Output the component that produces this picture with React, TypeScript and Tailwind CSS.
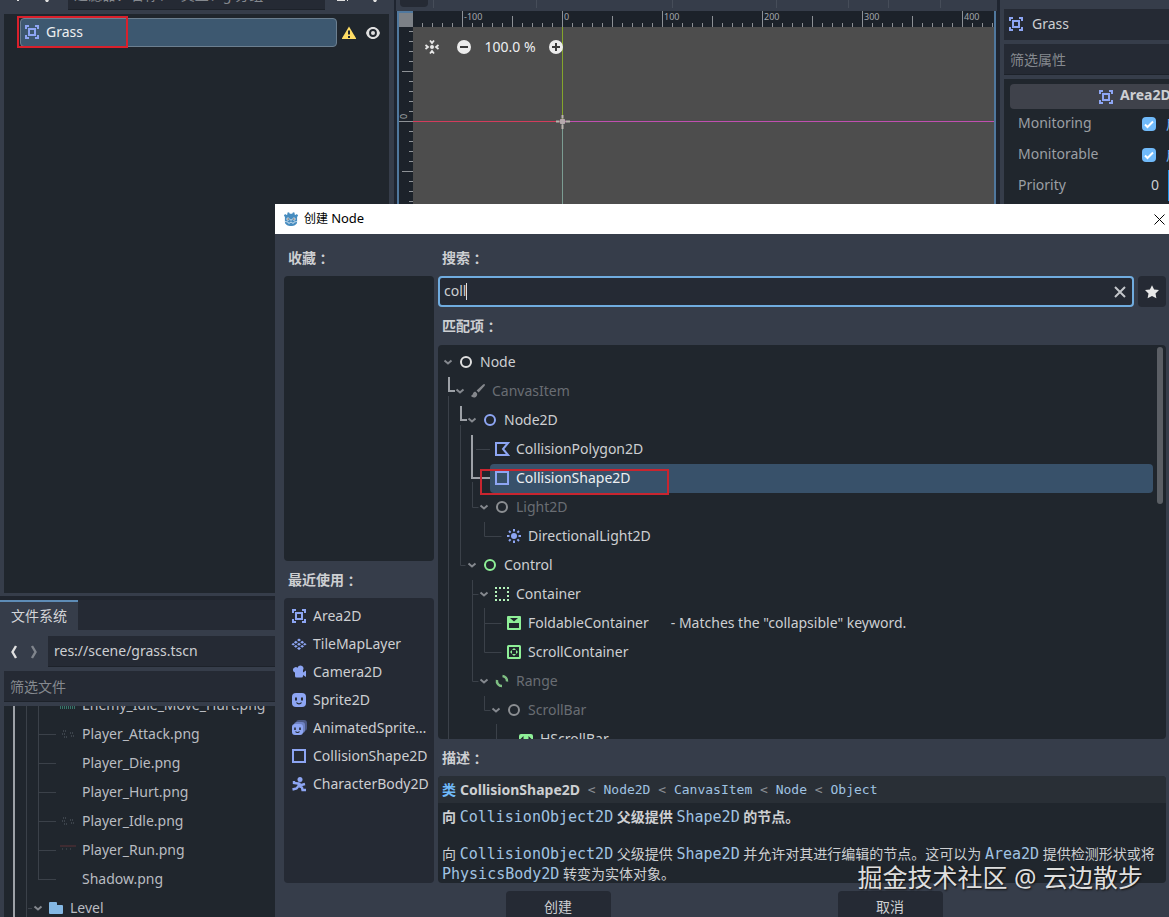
import type { ReactNode } from 'react';

const BLUE = '#8da5f3';
const GREEN = '#8eef97';

interface IconProps {
  color?: string;
}

function Icon({ children }: { children: ReactNode }) {
  return (
    <svg width="16" height="16" viewBox="0 0 16 16" fill="none" className="shrink-0" aria-hidden="true">
      {children}
    </svg>
  );
}

function NodeIcon({ color = '#e0e0e0' }: IconProps) {
  return (
    <Icon>
      <circle cx="8" cy="8" r="5" stroke={color} strokeWidth="2" />
    </Icon>
  );
}

function AreaIcon() {
  return (
    <Icon>
      <path
        fill={BLUE}
        d="M1 1v4h2V3h2V1zm10 0v2h2v2h2V1zM4 4v8h8V4zm2 2h4v4H6zm-5 5v4h4v-2H3v-2zm12 0v2h-2v2h4v-4z"
        fillRule="evenodd"
      />
    </Icon>
  );
}

function BrushIcon() {
  return (
    <Icon>
      <path
        fill="#84878c"
        d="M14.6 1.2c-.5-.3-1 0-1.5.4L6.6 7.6l2 2 5.9-6.6c.5-.6.6-1.4.1-1.8zM5.6 8.8c-1.3-.1-2.2.6-2.6 1.7-.4 1.3-1 1.9-2.1 2.3 1 1.6 3.3 2.2 4.9 1.1 1.1-.7 1.7-2 1.3-3.3z"
      />
    </Icon>
  );
}

function PolygonIcon() {
  return (
    <Icon>
      <path d="M14 2H2v12h12L9 8z" stroke={BLUE} strokeWidth="2" />
    </Icon>
  );
}

function ShapeIcon() {
  return (
    <Icon>
      <rect x="2" y="2" width="12" height="12" stroke={BLUE} strokeWidth="2" />
    </Icon>
  );
}

function LightIcon() {
  return (
    <Icon>
      <circle cx="8" cy="8" r="3" fill={BLUE} />
      <path
        d="M8 1v2.5M8 12.5V15M1 8h2.5M12.5 8H15M3 3l1.6 1.6M11.4 11.4L13 13M3 13l1.6-1.6M11.4 4.6L13 3"
        stroke={BLUE}
        strokeWidth="2"
      />
    </Icon>
  );
}

function ContainerIcon() {
  return (
    <Icon>
      <rect x="2" y="2" width="12" height="12" stroke="#b5f5bb" strokeWidth="2" strokeDasharray="2 2" strokeDashoffset="1" />
    </Icon>
  );
}

function FoldableIcon() {
  return (
    <Icon>
      <path
        fill={GREEN}
        fillRule="evenodd"
        d="M2 1a1 1 0 0 0-1 1v12a1 1 0 0 0 1 1h12a1 1 0 0 0 1-1V2a1 1 0 0 0-1-1zm2 2h8L8 6.5zM3 8h10v5H3z"
      />
    </Icon>
  );
}

function ScrollContainerIcon() {
  return (
    <Icon>
      <rect x="2" y="2" width="12" height="12" rx=".5" stroke={GREEN} strokeWidth="2" />
      <path fill={GREEN} d="M8 4L6 6h4zM8 12l2-2H6zM4 8l2 2V6zM12 8l-2-2v4z" />
    </Icon>
  );
}

function RangeIcon() {
  return (
    <Icon>
      <path d="M8.5 3A5 5 0 0 1 13 8.5M8 13A5 5 0 0 1 3 7" stroke="#7fbf83" strokeWidth="2.5" />
    </Icon>
  );
}

function HScrollIcon() {
  return (
    <Icon>
      <path
        fill={GREEN}
        fillRule="evenodd"
        d="M3 3a2 2 0 0 0-2 2v6a2 2 0 0 0 2 2h10a2 2 0 0 0 2-2V5a2 2 0 0 0-2-2zm2.5 2v6l-3-3zm5 0l3 3-3 3z"
      />
    </Icon>
  );
}

function TileMapIcon() {
  return (
    <Icon>
      <path
        fill={BLUE}
        d="M8 2.5L6 4l2 1.5L10 4zM4.8 4.8L2.9 6.3l1.9 1.4 2-1.4zM11.2 4.8l-2 1.5 2 1.4 1.9-1.4zM8 6.8L6 8.2l2 1.5 2-1.5zM2.2 6.9L.4 8.2l1.8 1.4L4 8.2zM13.8 6.9L12 8.2l1.8 1.4 1.8-1.4zM4.8 8.9l-1.9 1.4 1.9 1.5 2-1.5zM11.2 8.9l-2 1.4 2 1.5 1.9-1.5zM8 11l-2 1.4L8 14l2-1.6z"
      />
    </Icon>
  );
}

function CameraIcon() {
  return (
    <Icon>
      <path
        fill={BLUE}
        d="M9.5 1.5a3 3 0 0 0-2.9 2.3 2.8 2.8 0 1 0-2.6 4.8V12a1.5 1.5 0 0 0 1.5 1.5h5A1.5 1.5 0 0 0 12 12v-1l3 2V6.5l-3 2V6.2A3 3 0 0 0 9.5 1.5z"
      />
    </Icon>
  );
}

function SpriteIcon() {
  return (
    <Icon>
      <rect x="1" y="1" width="14" height="14" rx="4" fill={BLUE} />
      <path d="M5 5.5v3M11 5.5v3" stroke="#252a34" strokeWidth="2" />
      <path d="M5.5 10.5a3 3 0 0 0 5 0" stroke="#252a34" strokeWidth="1.3" />
    </Icon>
  );
}

function AnimatedSpriteIcon() {
  return (
    <Icon>
      <rect x="5" y="0" width="11" height="11" rx="3" fill="#4b5884" />
      <rect x="3" y="2" width="11" height="11" rx="3" fill="#6f82c2" />
      <rect x="1" y="4" width="11" height="11" rx="3" fill={BLUE} />
      <path d="M4 7.5V10M9 7.5V10" stroke="#252a34" strokeWidth="1.6" />
      <path d="M4.5 11.5a2.5 2.5 0 0 0 4 0" stroke="#252a34" strokeWidth="1.2" />
    </Icon>
  );
}

function CharacterIcon() {
  return (
    <Icon>
      <circle cx="9" cy="3.5" r="2.5" fill={BLUE} />
      <path
        d="M8.5 6.5L7.5 10M3 5v2l4 .5 3.5 1.5 3.5-1M7.5 10l-2 2.5-4 1M7.5 10l3.5 1.5.5 2.5H15"
        stroke={BLUE}
        strokeWidth="2.4"
      />
    </Icon>
  );
}

function FolderIcon() {
  return (
    <Icon>
      <path fill="#84b8e4" d="M2 2a1 1 0 0 0-1 1v10a1 1 0 0 0 1 1h12a1 1 0 0 0 1-1V6a1 1 0 0 0-1-1H9V3a1 1 0 0 0-1-1z" />
    </Icon>
  );
}

function WarningIcon() {
  return (
    <Icon>
      <path fill="#ffdd65" d="M8 1.500L1 13.200V14h14v-.8z" />
      <path d="M8 5.500v4M8 11v2" stroke="#21262e" strokeWidth="2" />
    </Icon>
  );
}

function EyeIcon() {
  return (
    <Icon>
      <path
        fill="#e0e0e0"
        fillRule="evenodd"
        d="M8 2C4.5 2 2 4.5 1 8c1 3.5 3.5 6 7 6s6-2.5 7-6c-1-3.5-3.5-6-7-6zm0 2.1a3.9 3.9 0 1 1 0 7.8 3.9 3.9 0 0 1 0-7.8z"
      />
      <circle cx="8" cy="8" r="2" fill="#e0e0e0" />
    </Icon>
  );
}

function GodotIcon() {
  return (
    <Icon>
      <path
        fill="#478cbf"
        d="M6 1.2l-1.7.5.2 1.600-1 .6-1.400-1L.9 4.400l1 1.500V11c0 2.500 3 4 6.100 4s6.100-1.500 6.100-4V5.900l1-1.500-1.200-1.500-1.400 1-1-.6.2-1.600-1.700-.5-.8 1.500H6.800z"
      />
      <circle cx="5" cy="8" r="1.5" fill="#fff" />
      <circle cx="11" cy="8" r="1.5" fill="#fff" />
      <circle cx="5.1" cy="8.1" r=".8" fill="#414042" />
      <circle cx="10.9" cy="8.1" r=".8" fill="#414042" />
      <path d="M2 10.5l3 .5.3 1.2h1.5l.2-.9h2l.2.9h1.5l.3-1.2 3-.5" stroke="#dceaf5" strokeWidth=".8" />
      <path d="M8 8v1.6" stroke="#fff" />
    </Icon>
  );
}

function Chevron() {
  return (
    <svg width="12" height="12" viewBox="0 0 12 12" fill="none" className="shrink-0" aria-hidden="true">
      <path d="M2.5 4.5L6 7.5l3.5-3" stroke="#84888e" strokeWidth="2" />
    </svg>
  );
}

function Heading({ children, className }: { children: string; className: string }) {
  return (
    <h2 className={`flex items-center pl-1 font-bold text-[#cdcfd2] ${className}`}>
      {children}
      <span lang="zh-Hant" className="font-['Noto_Sans_CJK_TC']">
        ：
      </span>
    </h2>
  );
}

/* Scene dock and file system */

const files = [
  'Enemy_Idle_Move_Hurt.png',
  'Player_Attack.png',
  'Player_Die.png',
  'Player_Hurt.png',
  'Player_Idle.png',
  'Player_Run.png',
  'Shadow.png',
];

function FileThumb({ name }: { name: string }) {
  return (
    <Icon>
      {name.startsWith('Enemy') && <path d="M0 9h16M0 11h16" stroke="#3f8f7c" strokeWidth="1.5" strokeDasharray="1 1" />}
      {(name === 'Player_Attack.png' || name === 'Player_Idle.png') && (
        <path d="M3 5h4M2 8h4M10 7h3M4 11h3M11 10h3" stroke="#59616b" strokeDasharray="1 1" />
      )}
      {name === 'Player_Run.png' && (
        <>
          <path d="M0 4h16" stroke="#5d3036" />
          <path d="M2 7h12" stroke="#4d545d" strokeDasharray="1 3" />
        </>
      )}
    </Icon>
  );
}

function FileSystem() {
  return (
    <section className="flex h-[321px] shrink-0 flex-col border-t-4 border-[#20252e] bg-[#363d4a]">
      <div className="flex h-[30px] shrink-0 bg-[#252a34]">
        <button className="w-[78px] border-t-2 border-[#5e8cb6] bg-[#363d4a] text-[#d3d5d8]">文件系统</button>
      </div>
      <div className="mt-1.5 flex h-[31px] shrink-0 items-center">
        <button className="flex w-6 justify-center pl-1" aria-label="Back">
          <svg width="8" height="16" viewBox="0 0 8 16" fill="none">
            <path d="M6 2L2.500 8 6 14" stroke="#e0e0e0" strokeWidth="2.4" />
          </svg>
        </button>
        <button className="flex w-6 pl-1.5" aria-label="Forward">
          <svg width="8" height="16" viewBox="0 0 8 16" fill="none">
            <path d="M2 2l3.5 6L2 14" stroke="#80858d" strokeWidth="2.4" />
          </svg>
        </button>
        <input
          aria-label="Path"
          defaultValue="res://scene/grass.tscn"
          className="h-full min-w-0 flex-1 border-b border-[#1d222a] bg-[#252a34] px-1.5 pb-0.5 text-[#cdcfd2] outline-none"
        />
      </div>
      <input
        aria-label="筛选文件"
        placeholder="筛选文件"
        className="mt-1 ml-1 h-[31px] shrink-0 border-b border-[#1d222a] bg-[#252a34] px-1.5 outline-none placeholder:text-[#85898f]"
      />
      <div className="relative mt-1 ml-1 min-h-0 flex-1 overflow-hidden bg-[#20262d]">
        <svg className="absolute inset-0 h-full w-16" fill="none" aria-hidden="true">
          <path d="M10 0v240" stroke="#9da1a7" strokeWidth="2" />
          <path
            d="M22.5 0v240M34.5 0v173.5M34 28.5h18M34 57.5h18M34 86.5h18M34 115.5h18M34 144.5h18M34 173.5h18M24 202.5h4"
            stroke="#3b4149"
          />
        </svg>
        <ul className="relative -mt-4">
          {files.map((name) => (
            <li key={name} className="flex h-[29px] items-center gap-1.5 pl-14">
              <FileThumb name={name} />
              {name}
            </li>
          ))}
          <li className="flex h-[29px] items-center pl-7">
            <Chevron />
            <span className="ml-1 flex items-center gap-1.5">
              <FolderIcon />
              Level
            </span>
          </li>
        </ul>
      </div>
    </section>
  );
}

function LeftDock() {
  return (
    <aside className="flex w-[394px] shrink-0 flex-col bg-[#363d4a]">
      <div className="flex h-[14px] shrink-0 items-start overflow-hidden">
        <svg width="68" height="4" className="shrink-0" aria-hidden="true">
          <path d="M17 0h2v1h-2zM45 0h4l-1 2h-2z" fill="#e0e0e0" />
        </svg>
        <input
          aria-label="过滤器"
          placeholder="过滤器：名称、t:类型、g:分组"
          className="-mt-[21px] h-[31px] w-[257px] border-b border-[#1d222a] bg-[#252a34] px-1.5 outline-none placeholder:text-[#85898f]"
        />
        <svg width="60" height="4" className="shrink-0" aria-hidden="true">
          <path d="M12 0h8v1h-8zM22 0h1v1h-1zM48 0h4l-1 2h-2z" fill="#e0e0e0" />
        </svg>
      </div>
      <div className="mr-[5px] mb-[3px] ml-1 min-h-0 flex-1 bg-[#20262d] pt-1">
        <div className="flex items-center">
          <div className="relative ml-4 flex h-[29px] w-[317px] items-center gap-1.5 rounded-sm border border-[#6c7f90] bg-[#3d5870] pb-0.5 pl-[3px] text-[#edeff1]">
            <AreaIcon />
            Grass
            <div className="absolute -top-[3px] -left-1 h-8 w-[111px] border-2 border-[#d9202c]" />
          </div>
          <button className="ml-1" aria-label="Warnings">
            <WarningIcon />
          </button>
          <button className="ml-2" aria-label="Toggle visibility">
            <EyeIcon />
          </button>
        </div>
      </div>
      <FileSystem />
    </aside>
  );
}

/* 2D viewport */

const marks = Array.from({ length: 64 }, (_, i) => i - 16);

function TopRuler() {
  return (
    <svg className="h-4 w-full bg-[#1c222a]" aria-hidden="true">
      {marks.map((n) => {
        const x = 149.5 + n * 10;
        const top = n % 10 === 0 ? 0 : n % 5 === 0 ? 5 : 12;
        return <path key={n} d={`M${x} ${top}V16`} stroke="#8d9196" />;
      })}
      {[-100, 0, 100, 200, 300, 400].map((value) => (
        <text key={value} x={151 + value} y="9" fontSize="9" fill="#a3a7ab">
          {value}
        </text>
      ))}
    </svg>
  );
}

function SideRuler() {
  return (
    <svg className="h-full w-[14px] shrink-0 bg-[#1c222a]" aria-hidden="true">
      {marks.map((n) => {
        const y = 94.5 + n * 10;
        const left = n % 10 === 0 ? 0 : n % 5 === 0 ? 3 : 10;
        return <path key={n} d={`M${left} ${y}H14`} stroke="#8d9196" />;
      })}
      <text x="0" y="0" fontSize="9" fill="#a3a7ab" transform="translate(8 92) rotate(-90)">
        0
      </text>
    </svg>
  );
}

function Viewport() {
  return (
    <main className="flex min-w-0 flex-1 flex-col bg-[#1f2530] pr-1 pl-[3px]">
      <div className="-mx-px flex h-[11px] shrink-0 bg-[#363d4a]">
        <div className="ml-1 h-[7px] w-7 rounded-b bg-[#252a34]" />
        <div className="ml-[5px] h-2 w-[104px] border-x border-[#464d59]" />
        <div className="h-2 w-[136px] border-r border-[#464d59]" />
        <div className="h-2 w-[104px] border-r border-[#464d59]" />
        <div className="h-2 w-[72px] border-r border-[#464d59]" />
        <div className="h-2 w-10 border-r border-[#464d59]" />
        <div className="h-2 w-[52px] border-r border-[#464d59]" />
      </div>
      <div className="flex min-h-0 flex-1 flex-col border-2 border-b-0 border-[#50789e]">
        <div className="flex h-[14px] shrink-0 items-end">
          <div className="h-full w-[14px] shrink-0 bg-[#7c8187]" />
          <div className="h-4 min-w-0 flex-1 overflow-hidden">
            <TopRuler />
          </div>
        </div>
        <div className="flex min-h-0 flex-1">
          <SideRuler />
          <div className="relative min-w-0 flex-1 bg-[#4d4d4d]">
            <svg className="absolute inset-0 h-full w-full" fill="none" aria-hidden="true">
              <rect x="0" y="94" width="149" height="1" fill="#d23c5c" />
              <rect x="150" y="94" width="100%" height="1" fill="#c04fb0" />
              <path d="M149.5 0v94" stroke="#84a52b" />
              <path d="M149.5 95v1000" stroke="#7b9c92" />
              <circle cx="149.5" cy="94.5" r="3" fill="#b5a9ac" />
              <path d="M143 94.500h3M153 94.500h4M149.500 88v3M149.500 98v4" stroke="#b9b4ad" strokeWidth="2" />
            </svg>
            <div className="relative flex h-10 items-center pl-[11px] text-[#eceef0]">
              <button aria-label="Center view">
                <Icon>
                  <circle cx="8" cy="8" r="2" fill="#e8e8e8" />
                  <path
                    d="M6 1.5L8 4l2-2.500M6 14.500L8 12l2 2.500M1.500 6L4 8l-2.500 2M14.500 6L12 8l2.500 2"
                    stroke="#e8e8e8"
                    strokeWidth="1.800"
                  />
                </Icon>
              </button>
              <button className="ml-4" aria-label="Zoom out">
                <Icon>
                  <circle cx="8" cy="8" r="7" fill="#ececec" />
                  <path d="M4 8h8" stroke="#3b3b3b" strokeWidth="2" />
                </Icon>
              </button>
              <button className="w-[76px] text-center">100.0 %</button>
              <button aria-label="Zoom in">
                <Icon>
                  <circle cx="8" cy="8" r="7" fill="#ececec" />
                  <path d="M4 8h8M8 4v8" stroke="#3b3b3b" strokeWidth="2" />
                </Icon>
              </button>
            </div>
          </div>
        </div>
      </div>
    </main>
  );
}

/* Inspector */

function CheckRow({ label }: { label: string }) {
  return (
    <label className="flex h-[31px] items-center pl-2 text-[#9b9fa4]">
      <span className="w-[124px] shrink-0 pb-0.5">{label}</span>
      <span className="grid shrink-0 place-items-center">
        <input
          type="checkbox"
          defaultChecked
          className="col-start-1 row-start-1 size-[14px] appearance-none rounded-sm bg-[#70bafa]"
        />
        <svg
          width="14"
          height="14"
          viewBox="0 0 14 14"
          fill="none"
          className="pointer-events-none col-start-1 row-start-1"
          aria-hidden="true"
        >
          <path d="M3 7.5l2.5 2.5L11 4.500" stroke="#fff" strokeWidth="2" />
        </svg>
      </span>
      <span className="ml-2.5 shrink-0 text-[#70bafa]">启用</span>
    </label>
  );
}

function Inspector() {
  return (
    <aside className="flex w-[169px] shrink-0 flex-col overflow-hidden bg-[#363d4a] pt-[9px] pl-1">
      <div className="flex h-[31px] shrink-0 items-center gap-2 bg-[#252a34] pb-0.5 pl-1 text-[#cdcfd2]">
        <AreaIcon />
        Grass
      </div>
      <input
        aria-label="筛选属性"
        placeholder="筛选属性"
        className="mt-1 h-[31px] shrink-0 border-b border-[#1d222a] bg-[#252a34] px-1.5 outline-none placeholder:text-[#85898f]"
      />
      <div className="mt-1 min-h-0 flex-1 bg-[#20262d] pt-[5px] pl-1.5">
        <div className="flex h-[25px] items-center gap-1.5 overflow-hidden rounded-l-sm bg-[#3f424b] pl-[88px] font-bold text-[#cdcfd2]">
          <AreaIcon />
          <span className="pb-1">Area2D</span>
        </div>
        <div className="-mt-px">
          <CheckRow label="Monitoring" />
          <CheckRow label="Monitorable" />
          <label className="flex h-[31px] items-center pl-2 text-[#9b9fa4]">
            <span className="w-[133px] shrink-0 pb-0.5">Priority</span>
            <input defaultValue="0" className="w-[17px] shrink-0 pb-0.5 text-[#cdcfd2] outline-none" />
            <span className="h-full w-1 shrink-0 bg-[#2295e8]" />
          </label>
        </div>
      </div>
    </aside>
  );
}

/* Create Node dialog */

interface TreeItem {
  name: string;
  indent: string;
  icon: ReactNode;
  leaf?: boolean;
  muted?: boolean;
  note?: string;
}

const tree: TreeItem[] = [
  { name: 'Node', indent: 'pl-1', icon: <NodeIcon /> },
  { name: 'CanvasItem', indent: 'pl-4', icon: <BrushIcon />, muted: true },
  { name: 'Node2D', indent: 'pl-7', icon: <NodeIcon color={BLUE} /> },
  { name: 'CollisionPolygon2D', indent: 'pl-10', icon: <PolygonIcon />, leaf: true },
  { name: 'CollisionShape2D', indent: 'pl-10', icon: <ShapeIcon />, leaf: true },
  { name: 'Light2D', indent: 'pl-10', icon: <NodeIcon color="#8c8f93" />, muted: true },
  { name: 'DirectionalLight2D', indent: 'pl-[52px]', icon: <LightIcon />, leaf: true },
  { name: 'Control', indent: 'pl-7', icon: <NodeIcon color={GREEN} /> },
  { name: 'Container', indent: 'pl-10', icon: <ContainerIcon /> },
  {
    name: 'FoldableContainer',
    indent: 'pl-[52px]',
    icon: <FoldableIcon />,
    leaf: true,
    note: '- Matches the "collapsible" keyword.',
  },
  { name: 'ScrollContainer', indent: 'pl-[52px]', icon: <ScrollContainerIcon />, leaf: true },
  { name: 'Range', indent: 'pl-10', icon: <RangeIcon />, muted: true },
  { name: 'ScrollBar', indent: 'pl-[52px]', icon: <NodeIcon color="#8c8f93" />, muted: true },
  { name: 'HScrollBar', indent: 'pl-16', icon: <HScrollIcon />, leaf: true },
];

function TreeRow({ item, selected }: { item: TreeItem; selected: boolean }) {
  return (
    <li className={`relative flex h-[29px] items-center ${item.indent} ${item.muted ? 'text-[#696d73]' : 'text-[#cdcfd2]'}`}>
      {selected && <div className="absolute top-px right-[13px] -bottom-px left-[52px] rounded-sm bg-[#38516a]" />}
      <span className="flex w-4 shrink-0">{!item.leaf && <Chevron />}</span>
      <span className={`relative flex items-center gap-1.5 ${selected ? 'text-[#edeff1]' : ''}`}>
        {item.icon}
        {item.name}
      </span>
      {item.note && <span className="ml-[22px]">{item.note}</span>}
      {selected && <div className="absolute top-1.5 left-[42px] h-[26px] w-[189px] border-2 border-[#c9252f]" />}
    </li>
  );
}

function MatchTree() {
  return (
    <div className="relative min-h-0 flex-1 overflow-hidden rounded-sm bg-[#20262d] pt-0.5">
      <svg className="absolute inset-0 h-full w-20" fill="none" aria-hidden="true">
        <path
          d="M10.5 51v400M22.5 80v140.5h5M38 104.5h14M34.5 137v25.5h6M46.5 177v14.5h17M34.5 235v101.5h6M34.5 249.5h6M46.5 263v44.5h17M46.5 278.5h17M46.5 351v14.5h6M58.5 379v30"
          stroke="#3b4149"
        />
        <path d="M11 32v14h6M23 61v14h6M34 90v43h18" stroke="#9da1a7" strokeWidth="2" />
      </svg>
      <ul className="relative">
        {tree.map((item) => (
          <TreeRow key={item.name} item={item} selected={item.name === 'CollisionShape2D'} />
        ))}
      </ul>
      <div className="absolute top-0.5 right-[3px] h-[157px] w-1.5 rounded-sm bg-[#5b5f65]" />
    </div>
  );
}

const recent = [
  { name: 'Area2D', icon: <AreaIcon /> },
  { name: 'TileMapLayer', icon: <TileMapIcon /> },
  { name: 'Camera2D', icon: <CameraIcon /> },
  { name: 'Sprite2D', icon: <SpriteIcon /> },
  { name: 'AnimatedSprite2D', icon: <AnimatedSpriteIcon /> },
  { name: 'CollisionShape2D', icon: <ShapeIcon /> },
  { name: 'CharacterBody2D', icon: <CharacterIcon /> },
];

function Code({ children }: { children: string }) {
  return (
    <a href="#" className="font-['DejaVu_Sans_Mono',monospace] text-[15px] font-normal text-[#a0c3e2]">
      {children}
    </a>
  );
}

function Description() {
  return (
    <article className="h-[107px] shrink-0 overflow-hidden rounded-sm bg-[#20262d] text-[#cdcfd2]">
      <header className="flex h-[27px] items-center bg-[#292f36] pl-1 whitespace-pre">
        <b className="text-[#70bafa]">类</b>
        <b className="ml-1">CollisionShape2D</b>
        <span className="font-['DejaVu_Sans_Mono',monospace] text-[13px] text-[#8a8e94]">
          {['Node2D', 'CanvasItem', 'Node', 'Object'].map((name) => (
            <span key={name}>
              {' < '}
              <a href="#" className="text-[#a0c3e2]">
                {name}
              </a>
            </span>
          ))}
        </span>
      </header>
      <p className="mt-1 h-[19px] pl-1 leading-[19px] font-bold">
        向 <Code>CollisionObject2D</Code> 父级提供 <Code>Shape2D</Code> 的节点。
      </p>
      <p className="mt-[18px] pl-1 leading-[19px]">
        向 <Code>CollisionObject2D</Code> 父级提供 <Code>Shape2D</Code> 并允许对其进行编辑的节点。这可以为{' '}
        <Code>Area2D</Code> 提供检测形状或将 <Code>PhysicsBody2D</Code> 转变为实体对象。
      </p>
    </article>
  );
}

function CreateNodeDialog() {
  return (
    <div
      role="dialog"
      aria-label="创建 Node"
      className="absolute top-[204px] right-0 -bottom-[13px] left-[275px] flex flex-col bg-[#363d4a]"
    >
      <div className="flex h-[30px] shrink-0 items-center bg-white pl-2 text-xs text-black">
        <GodotIcon />
        <span className="ml-[5px] flex-1">
          创建 <span className="text-[13px]">Node</span>
        </span>
        <button className="pr-1" aria-label="Close">
          <svg width="11" height="11" viewBox="0 0 11 11" aria-hidden="true">
            <path d="M.5.5l10 10M10.5.5l-10 10" stroke="#000" />
          </svg>
        </button>
      </div>

      <div className="flex min-h-0 flex-1 gap-1 pr-[3px] pl-[9px]">
        <div className="flex w-[150px] shrink-0 flex-col">
          <Heading className="h-[42px] pt-1.5">收藏</Heading>
          <div className="min-h-0 flex-1 rounded-sm bg-[#20262d]" />
          <Heading className="h-[37px]">最近使用</Heading>
          <ul className="h-[285px] shrink-0 rounded-sm bg-[#252a34] pt-1 text-[#cdcfd2]">
            {recent.map(({ name, icon }) => (
              <li key={name} className="flex h-7 items-center gap-1.5 pr-1 pl-[7px]">
                {icon}
                <span className={`min-w-0 whitespace-nowrap ${name === 'AnimatedSprite2D' ? 'truncate' : ''}`}>{name}</span>
              </li>
            ))}
          </ul>
        </div>

        <div className="flex min-w-0 flex-1 flex-col">
          <Heading className="h-[42px] pt-1.5">搜索</Heading>
          <div className="flex h-[31px] shrink-0 gap-1">
            <div className="flex min-w-0 flex-1 items-center rounded-sm border-2 border-[#70acdf] bg-[#252a34] pl-1 text-[#cdcfd2]">
              <input aria-label="搜索" defaultValue="coll" className="field-sizing-content pb-0.5 outline-none" />
              <span className="h-[17px] w-px bg-[#dfe1e3]" />
              <button className="mr-1 ml-auto" aria-label="Clear">
                <Icon>
                  <path d="M3 3l10 10M13 3L3 13" stroke="#c3c6ca" strokeWidth="2" />
                </Icon>
              </button>
            </div>
            <button className="flex w-7 items-center justify-center rounded-sm bg-[#252a34]" aria-label="Favorite">
              <Icon>
                <path
                  fill="#e8e8e8"
                  d="M8 1.2l2.1 4.3 4.9.6-3.5 3.3.9 4.9L8 12l-4.4 2.3.9-4.9L1 6.1l4.9-.6z"
                />
              </Icon>
            </button>
          </div>
          <Heading className="h-[38px]">匹配项</Heading>
          <MatchTree />
          <Heading className="h-[37px]">描述</Heading>
          <Description />
        </div>
      </div>

      <div className="my-2 flex h-[31px] shrink-0 justify-center gap-[227px] pl-1 text-[#cdcfd2]">
        <button className="w-[105px] rounded-sm bg-[#252a34]">创建</button>
        <button className="w-[105px] rounded-sm bg-[#252a34]">取消</button>
      </div>
    </div>
  );
}

export default function App() {
  return (
    <div className="relative flex h-screen overflow-hidden bg-[#1f2530] font-['Noto_Sans','Noto_Sans_CJK_SC',sans-serif] text-sm leading-5 text-[#b9bcc1]">
      <LeftDock />
      <Viewport />
      <Inspector />
      <CreateNodeDialog />
      <p className="absolute right-[26px] bottom-[22px] text-[25px] leading-9 text-[#dedede] [text-shadow:1px_1px_2px_#111]">
        掘金技术社区 @ 云边散步
      </p>
    </div>
  );
}
